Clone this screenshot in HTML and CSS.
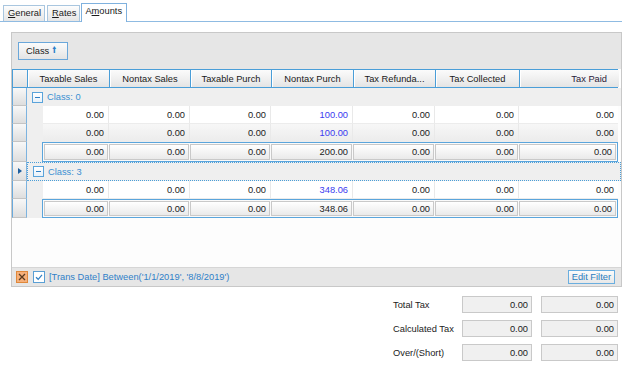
FILE: index.html
```html
<!DOCTYPE html>
<html>
<head>
<meta charset="utf-8">
<link rel="stylesheet" href="styles.css">
</head>
<body>
<div class="tabs">
  <div class="tab"><u>G</u>eneral</div>
  <div class="tab"><u>R</u>ates</div>
  <div class="tab active">A<u>m</u>ounts</div>
</div>
<div class="content">
  <div class="panel">
    <div class="groupby">
      <div class="grp-btn">Class <span class="arr">&#129049;</span></div>
    </div>
    <div class="grid">
      <div class="row header">
        <div class="ind"></div>
        <div class="h">Taxable Sales</div>
        <div class="h">Nontax Sales</div>
        <div class="h">Taxable Purch</div>
        <div class="h">Nontax Purch</div>
        <div class="h">Tax Refunda...</div>
        <div class="h">Tax Collected</div>
        <div class="h h-right">Tax Paid</div>
      </div>

      <div class="row group">
        <div class="ind"></div>
        <div class="gcell"><span class="exp"></span><span class="gtext">Class: 0</span></div>
      </div>
      <div class="row data">
        <div class="ind"></div><div class="indent"></div>
        <div class="c">0.00</div><div class="c">0.00</div><div class="c">0.00</div><div class="c blue">100.00</div><div class="c">0.00</div><div class="c">0.00</div><div class="c">0.00</div>
      </div>
      <div class="row data alt">
        <div class="ind"></div><div class="indent"></div>
        <div class="c">0.00</div><div class="c">0.00</div><div class="c">0.00</div><div class="c blue">100.00</div><div class="c">0.00</div><div class="c">0.00</div><div class="c">0.00</div>
      </div>
      <div class="row sum">
        <div class="ind"></div><div class="indent"></div>
        <div class="sumbox">
          <div class="s">0.00</div><div class="s">0.00</div><div class="s">0.00</div><div class="s">200.00</div><div class="s">0.00</div><div class="s">0.00</div><div class="s">0.00</div>
        </div>
      </div>

      <div class="row group focus">
        <div class="ind"><span class="tri"></span></div>
        <div class="gcell"><span class="exp"></span><span class="gtext">Class: 3</span></div>
      </div>
      <div class="row data">
        <div class="ind"></div><div class="indent"></div>
        <div class="c">0.00</div><div class="c">0.00</div><div class="c">0.00</div><div class="c blue">348.06</div><div class="c">0.00</div><div class="c">0.00</div><div class="c">0.00</div>
      </div>
      <div class="row sum last">
        <div class="ind"></div><div class="indent"></div>
        <div class="sumbox">
          <div class="s">0.00</div><div class="s">0.00</div><div class="s">0.00</div><div class="s">348.06</div><div class="s">0.00</div><div class="s">0.00</div><div class="s">0.00</div>
        </div>
      </div>
    </div>
    <div class="filler"></div>
    <div class="filterbar">
      <span class="fx">
        <svg width="8" height="8" viewBox="0 0 8 8"><path d="M1 1 L7 7 M7 1 L1 7" stroke="#5a3a1e" stroke-width="1.3"/></svg>
      </span>
      <span class="fchk">
        <svg width="8" height="8" viewBox="0 0 8 8"><path d="M1 4.2 L3.2 6.3 L7 1.8" fill="none" stroke="#2f7fc4" stroke-width="1.2"/></svg>
      </span>
      <span class="ftext">[Trans Date] Between('1/1/2019', '8/8/2019')</span>
      <span class="editf">Edit Filter</span>
    </div>
  </div>

  <div class="totals">
    <div class="tlabel">Total Tax</div><div class="tbox">0.00</div><div class="tbox">0.00</div>
    <div class="tlabel">Calculated Tax</div><div class="tbox">0.00</div><div class="tbox">0.00</div>
    <div class="tlabel">Over/(Short)</div><div class="tbox">0.00</div><div class="tbox">0.00</div>
  </div>
</div>
</body>
</html>
```
FILE: styles.css
```css
* { box-sizing: border-box; }
body {
  margin: 0;
  background: #fff;
  font-family: "Liberation Sans", Arial, sans-serif;
  font-size: 9.3px;
  color: #1b1b1b;
  width: 627px;
  height: 369px;
  overflow: hidden;
}

/* tabs */
.tabs {
  display: flex;
  align-items: flex-end;
  height: 22px;
  padding-left: 3px;
  border-bottom: 1px solid #8fbbe2;
  margin-right: 5px;
}
.tab {
  height: 16px;
  padding: 0 3px 0 4px;
  margin-right: 2px;
  border: 1px solid #a9c6df;
  border-bottom: none;
  background: linear-gradient(#fdfdfd, #e6e6e6);
  display: flex;
  align-items: center;
  line-height: 1;
}
.tab.active {
  height: 19px;
  margin-left: -1px;
  margin-bottom: -1px;
  padding: 0 4px 2px 3px;
  background: #fff;
  border-color: #7fb1de;
}

/* panel */
.content { padding: 10px 0 0 11px; }
.panel {
  width: 611px;
  height: 255px;
  border: 1px solid #c8c8c8;
  display: flex;
  flex-direction: column;
  background: #fdfdfd;
}
.groupby {
  height: 36px;
  background: #e6e6e6;
  padding: 9px 0 0 6px;
}
.grp-btn {
  width: 50px;
  height: 18px;
  border: 1px solid #6aa7da;
  background: linear-gradient(#fbfbfb, #e4e4e4);
  display: flex;
  align-items: center;
  padding-left: 7px;
  gap: 3px;
}
.arr { color: #2f80c8; font-size: 9px; font-family: "DejaVu Sans", sans-serif; }

/* grid */
.grid { width: 606px; }
.row { display: grid; }
.header {
  grid-template-columns: 15px 82px 81px 81px 82px 82px 84px 99px;
  height: 19px;
  border: 1px solid #4a9ed8;
}
.header .ind { background: linear-gradient(#f7f7f7, #e2e2e2); border-right: 1px solid #4a9ed8; border-left: none; border-bottom: none; }
.h {
  background: linear-gradient(#fbfbfb 0%, #f0f0f0 50%, #e4e4e4 100%);
  border-right: 1px solid #4a9ed8;
  box-shadow: inset 1px 0 #fff;
  display: flex;
  align-items: center;
  justify-content: center;
  color: #1a1a1a;
}
.h:last-child { border-right: none; }
.h-right { justify-content: flex-end; padding-right: 12px; color: #2a1a3a; }

.ind {
  background: linear-gradient(#f8f8f8, #dedede);
  border-left: 1px solid #69a9dc;
  border-right: 1px solid #7db3df;
  border-bottom: 1px solid #c4c4c4;
  display: flex;
  align-items: center;
  justify-content: center;
}
.tri {
  width: 0; height: 0;
  border-left: 4px solid #1f5f9e;
  border-top: 3px solid transparent;
  border-bottom: 3px solid transparent;
}

.group {
  grid-template-columns: 15px 1fr;
  height: 18px;
  width: 609px;
}
.gcell {
  background: #efefef;
  display: flex;
  align-items: center;
  padding-left: 5px;
  gap: 4px;
}
.group.focus { height: 19px; }
.group.focus .gcell {
  border: 1px dotted #4a9ed8;
}
.exp {
  width: 11px;
  height: 11px;
  border: 1px solid #5aa3da;
  background: linear-gradient(#ffffff, #e8f1fa);
  position: relative;
}
.exp::after {
  content: "";
  position: absolute;
  left: 2px; top: 4px;
  width: 5px; height: 1px;
  background: #2f7fc4;
}
.gtext { color: #3b8fd2; }

.data {
  grid-template-columns: 15px 16px 66px 81px 81px 82px 82px 84px 99px;
  height: 18px;
}
.indent { background: #efefef; }
.c {
  background: #fff;
  border-right: 1px solid #e9e9e9;
  border-bottom: 1px solid #ececec;
  display: flex;
  align-items: center;
  justify-content: flex-end;
  padding-right: 4px;
}
.alt .c { background: linear-gradient(#f7f7f7, #ececec); }
.c:last-child { border-right: none; }
.blue { color: #3b3bf0; }

.sum {
  grid-template-columns: 15px 15px 576px;
  height: 20px;
}
.sum.last { height: 19px; }
.sumbox {
  border: 1px solid #5aa5dc;
  display: grid;
  grid-template-columns: 66px 81px 81px 82px 82px 84px 98px;
  background: #fafafa;
}
.s {
  margin: 1px 1px 1px 0;
  border: 1px solid #c9c9c9;
  background: linear-gradient(#ffffff, #eaeaea);
  display: flex;
  align-items: center;
  justify-content: flex-end;
  padding-right: 3px;
  color: #222;
}
.s:first-child { margin-left: 1px; }

.filler { flex: 1; background: #fdfdfd; }
.filterbar {
  height: 19px;
  background: #e6e6e6;
  border-top: 1px solid #d6d6d6;
  display: flex;
  align-items: center;
  padding: 0 6px 0 4px;
}
.fx {
  width: 12px; height: 12px;
  border: 1px solid #e0883a;
  background: #f6b07a;
  display: flex; align-items: center; justify-content: center;
}
.fchk {
  width: 12px; height: 12px;
  margin-left: 5px;
  border: 1px solid #5a9fd4;
  background: #fff;
  display: flex; align-items: center; justify-content: center;
}
.ftext { color: #2f80c8; margin-left: 4px; flex: 1; }
.editf {
  height: 14px;
  padding: 0 3px;
  border: 1px solid #6aaedf;
  background: linear-gradient(#fbfbfb, #e8e8e8);
  color: #2a7cc0;
  display: flex;
  align-items: center;
}

/* totals */
.totals {
  display: grid;
  grid-template-columns: 60px 70px 77px;
  column-gap: 9px;
  row-gap: 7px;
  margin: 9px 0 0 382px;
  width: 225px;
}
.tlabel { display: flex; align-items: center; height: 17px; color: #1b1b1b; white-space: nowrap; }
.tbox {
  height: 17px;
  border: 1px solid #c9c9c9;
  background: #f0f0f0;
  display: flex;
  align-items: center;
  justify-content: flex-end;
  padding-right: 3px;
}
```
